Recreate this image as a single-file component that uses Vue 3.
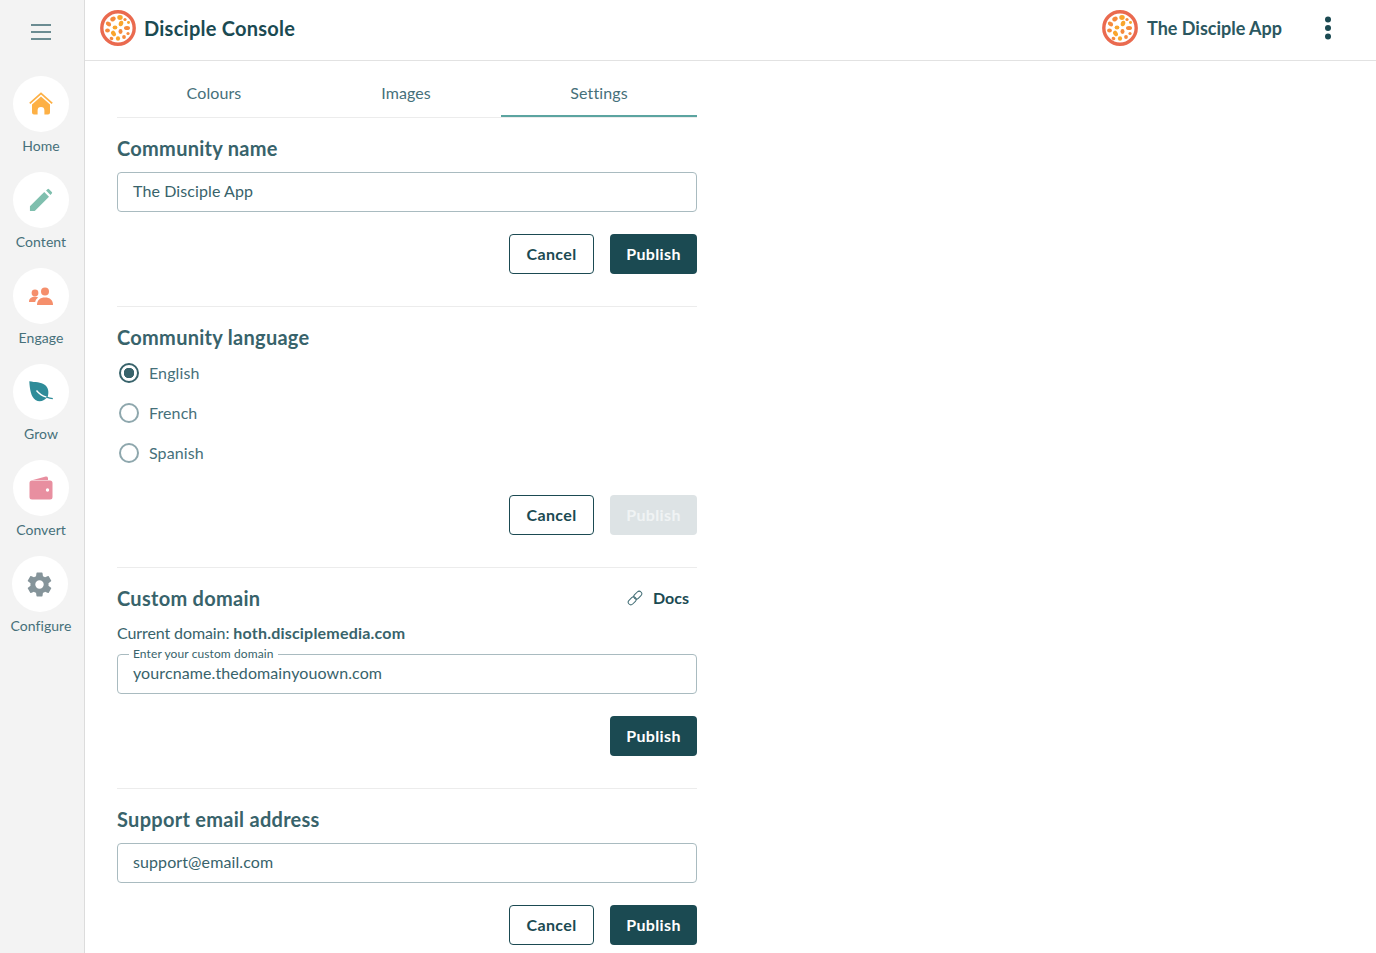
<script setup>
const nav = [
  { label: 'Home', key: 'home' },
  { label: 'Content', key: 'content' },
  { label: 'Engage', key: 'engage' },
  { label: 'Grow', key: 'grow' },
  { label: 'Convert', key: 'convert' },
  { label: 'Configure', key: 'configure' },
]
const tabs = ['Colours', 'Images', 'Settings']
const langs = ['English', 'French', 'Spanish']
const seeds = [
  [2,-10.5,2.7,2.4,'#f9a52c',0],[-5,-9,2.8,2.2,'#f58a3c',-30],[7,-8.5,1.6,1.5,'#f58a3c',0],[10.5,-5.5,1.5,1.4,'#f9a52c',0],
  [-9.5,-4,2.8,2.1,'#f58a3c',30],[3,-4.5,2.2,2.8,'#f9a52c',20],[9,0,3,2.1,'#f58a3c',0],[-3,-.5,2.4,1.9,'#f9a52c',0],
  [-10.5,2.5,2.4,1.9,'#f58a3c',0],[-4.5,5.5,2.2,3,'#f9a52c',-30],[2.5,3.5,2,2.4,'#f58a3c',0],[10,5.5,1.6,1.5,'#f58a3c',0],
  [0,10.5,2.1,2.3,'#f9a52c',0],[6,9,1.9,1.9,'#f58a3c',0],[-6.5,10.5,1.9,1.6,'#f58a3c',30],
]
</script>

<template>
  <div class="shell">
    <aside class="rail">
      <button class="burger" aria-label="Menu">
        <svg width="20" height="16" viewBox="0 0 20 16"><path d="M0 1h20M0 8h20M0 15h20" stroke="#3f6b73" stroke-width="1.6" fill="none"/></svg>
      </button>
      <nav class="rail-list">
        <a v-for="n in nav" :key="n.key" class="rail-item">
          <span class="disc" :class="{ shifted: n.key === 'configure' }">
            <svg v-if="n.key === 'home'" width="24" height="24" viewBox="0 0 24 24">
              <path d="M3 12.600 12 4.600l9 8v8a2 2 0 0 1-2 2h-3.600v-4.200a3.400 3.400 0 0 0-6.800 0v4.200H5a2 2 0 0 1-2-2z" fill="#fdb045"/>
              <path d="M.8 11.400 12 1.400l11.200 10" fill="none" stroke="#fdb045" stroke-width="1.800"/>
            </svg>
            <svg v-else-if="n.key === 'content'" width="24" height="24" viewBox="0 0 26 26">
              <path d="M1 25v-5.200L16.500 4.300l5.200 5.200L6.200 25z" fill="#7fbfae"/>
              <path d="M18.500 2.800 20 1.300a1.200 1.200 0 0 1 1.700 0l3 3a1.200 1.200 0 0 1 0 1.700l-1.500 1.500z" fill="#7fbfae"/>
            </svg>
            <svg v-else-if="n.key === 'engage'" width="24" height="18" viewBox="0 0 24 18">
              <circle cx="16" cy="4.500" r="4" fill="#f58f6c"/>
              <circle cx="6" cy="6" r="3.400" fill="#f58f6c"/>
              <path d="M8 18c0-5 3-7.500 8-7.500s8 2.500 8 7.500z" fill="#f58f6c"/>
              <path d="M0 15c0-3.600 2.500-5.200 6-5.200 1.300 0 2.300.2 3.200.6C7.400 11.600 6.500 13 6.200 15z" fill="#f58f6c"/>
            </svg>
            <svg v-else-if="n.key === 'grow'" width="24" height="22" viewBox="0 0 24 22">
              <path d="M.3.300C6 1.500 12 .8 16 4c3.200 2.600 4.200 7 2.800 11.500C15.500 20 10.500 21.500 6.500 19 1.800 16 .8 8 .3.300z" fill="#2e8c99"/>
              <path d="M7.500 9.500c2.500 3.200 6 5.500 10 6.700" fill="none" stroke="#fff" stroke-width="1.300"/>
              <path d="M17.500 16.200c2.200.7 4.200 1.200 6.300 1.500" fill="none" stroke="#2e8c99" stroke-width="1.300"/>
            </svg>
            <svg v-else-if="n.key === 'convert'" width="24" height="24" viewBox="0 0 24 24">
              <path d="M2 4.600 16.800.6a2 2 0 0 1 2.200 1.400V4H3.500z" fill="#e88fa0"/>
              <path d="M3 4.500h18a2.500 2.500 0 0 1 2.500 2.500v14a2.500 2.500 0 0 1-2.500 2.500H3A2.500 2.500 0 0 1 .5 21V7A2.500 2.500 0 0 1 3 4.500z" fill="#e88fa0"/>
              <circle cx="18.500" cy="14" r="1.700" fill="#fff"/>
            </svg>
            <svg v-else width="29" height="29" viewBox="0 0 24 24">
              <path d="M19.430 12.980c.04-.32.07-.64.07-.98s-.03-.66-.07-.98l2.110-1.650a.5.5 0 0 0 .12-.64l-2-3.460a.5.5 0 0 0-.61-.22l-2.490 1a7.300 7.300 0 0 0-1.690-.98l-.38-2.650A.49.49 0 0 0 14 2h-4a.49.49 0 0 0-.49.42l-.38 2.650c-.61.25-1.170.59-1.690.98l-2.490-1a.5.5 0 0 0-.61.22l-2 3.460a.49.49 0 0 0 .12.64l2.110 1.650c-.04.32-.07.65-.07.98s.03.66.07.98l-2.110 1.650a.5.5 0 0 0-.12.64l2 3.460c.12.22.39.3.61.22l2.490-1c.52.4 1.080.73 1.690.98l.38 2.650c.03.24.24.42.49.42h4c.25 0 .46-.18.49-.42l.38-2.650c.61-.25 1.170-.59 1.690-.98l2.490 1c.23.09.49 0 .61-.22l2-3.460a.5.5 0 0 0-.12-.64zM12 15.500a3.500 3.500 0 1 1 0-7 3.500 3.500 0 0 1 0 7z" fill="#85949a"/>
            </svg>
          </span>
          <span class="rail-label">{{ n.label }}</span>
        </a>
      </nav>
    </aside>

    <div class="main">
      <header class="topbar">
        <div class="brand">
          <svg class="logo" width="36" height="36" viewBox="-18 -18 36 36">
            <circle r="16.200" fill="#fff" stroke="#ea6a4f" stroke-width="3.400"/>
            <ellipse v-for="(s, i) in seeds" :key="i" :cx="s[0]" :cy="s[1]" :rx="s[2]" :ry="s[3]" :fill="s[4]" :transform="`rotate(${s[5]} ${s[0]} ${s[1]})`"/>
          </svg>
          <span class="brand-name">Disciple Console</span>
        </div>
        <div class="community">
          <svg class="logo" width="36" height="36" viewBox="-18 -18 36 36">
            <circle r="16.200" fill="#fff" stroke="#ea6a4f" stroke-width="3.400"/>
            <ellipse v-for="(s, i) in seeds" :key="i" :cx="s[0]" :cy="s[1]" :rx="s[2]" :ry="s[3]" :fill="s[4]" :transform="`rotate(${s[5]} ${s[0]} ${s[1]})`"/>
          </svg>
          <span class="community-name">The Disciple App</span>
          <svg class="kebab" width="6" height="24" viewBox="0 0 6 24">
            <circle cx="3" cy="3.500" r="3" fill="#1b4a52"/>
            <circle cx="3" cy="12" r="3" fill="#1b4a52"/>
            <circle cx="3" cy="20.500" r="3" fill="#1b4a52"/>
          </svg>
        </div>
      </header>

      <div class="page">
        <div class="tabs">
          <div v-for="t in tabs" :key="t" class="tab" :class="[t.toLowerCase(), { active: t === 'Settings' }]">{{ t }}</div>
        </div>

        <section class="sec">
          <h2>Community name</h2>
          <div class="field">The Disciple App</div>
          <div class="actions">
            <button class="btn ghost">Cancel</button>
            <button class="btn solid">Publish</button>
          </div>
        </section>

        <section class="sec">
          <h2>Community language</h2>
          <div class="radios">
            <label v-for="(l, i) in langs" :key="l" class="radio">
              <span class="dot" :class="{ on: i === 0 }"></span><span class="radio-text">{{ l }}</span>
            </label>
          </div>
          <div class="actions">
            <button class="btn ghost">Cancel</button>
            <button class="btn solid off">Publish</button>
          </div>
        </section>

        <section class="sec">
          <div class="head-row">
            <h2>Custom domain</h2>
            <a class="docs">
              <svg width="16" height="16" viewBox="0 0 16 16" fill="none" stroke="#3f6b73" stroke-width="1">
                <rect x="6.300" y="2.600" width="9" height="5.200" rx="2.600" transform="rotate(-45 10.800 5.200)"/>
                <rect x="0.700" y="8.200" width="9" height="5.200" rx="2.600" transform="rotate(-45 5.200 10.800)"/>
              </svg>
              <span class="docs-text">Docs</span>
            </a>
          </div>
          <p class="current">Current domain: <strong>hoth.disciplemedia.com</strong></p>
          <div class="field labelled">
            <span class="float-label">Enter your custom domain</span>
            yourcname.thedomainyouown.com
          </div>
          <div class="actions">
            <button class="btn solid">Publish</button>
          </div>
        </section>

        <section class="sec">
          <h2>Support email address</h2>
          <div class="field">support@email.com</div>
          <div class="actions">
            <button class="btn ghost">Cancel</button>
            <button class="btn solid">Publish</button>
          </div>
        </section>
      </div>
    </div>
  </div>
</template>

<style>
html, body { margin: 0; height: 100%; overflow: hidden; background: #fff; }
</style>

<style scoped>
.shell {
  display: flex;
  height: 953px;
  overflow: hidden;
  font-family: "Lato", "Open Sans", sans-serif;
  color: #38636b;
}
.rail {
  flex: 0 0 85px;
  box-sizing: border-box;
  padding-right: 2px;
  background: #f3f3f3;
  border-right: 1px solid #dcdcdc;
  display: flex;
  flex-direction: column;
  align-items: center;
}
.burger {
  border: 0;
  background: none;
  padding: 0;
  margin-top: 24px;
  height: 16px;
  display: block;
  line-height: 0;
}
.rail-list { display: flex; flex-direction: column; margin-top: 36px; }
.rail-item { height: 96px; display: flex; flex-direction: column; align-items: center; }
.disc {
  width: 56px;
  height: 56px;
  border-radius: 50%;
  background: #fff;
  display: flex;
  align-items: center;
  justify-content: center;
  flex: none;
}
.disc.shifted { margin-right: 2px; }
.rail-label { font-size: 14px; line-height: 17px; margin-top: 5px; letter-spacing: .05px; color: #46707a; }

.main { flex: 1; min-width: 0; display: flex; flex-direction: column; }
.topbar {
  height: 61px;
  box-sizing: border-box;
  border-bottom: 1px solid #e2e2e2;
  display: flex;
  justify-content: space-between;
  padding: 0 45px 0 15px;
  flex: none;
}
.brand, .community { display: flex; align-items: center; height: 56px; }
.brand-name { font-size: 20px; font-weight: 700; letter-spacing: .25px; color: #1b4a52; margin-left: 8px; }
.community-name { font-size: 18px; font-weight: 700; color: #2b5760; margin-left: 9px; width: 178px; }

.page { width: 580px; padding-left: 32px; }
.tabs { display: flex; height: 57px; box-sizing: border-box; border-bottom: 1px solid #ececec; }
.tab {
  text-align: center;
  font-size: 16px;
  line-height: 20px;
  letter-spacing: .1px;
  padding-top: 22px;
  box-sizing: border-box;
  height: 56px;
  color: #46707a;
}
.colours { flex: 0 0 194px; }
.images { flex: 0 0 190px; }
.settings { flex: 0 0 196px; }
.tab.active { border-bottom: 2px solid #5ba4a0; }

.sec { border-bottom: 1px solid #ececec; padding: 18px 0 32px; }
.sec:last-child { border-bottom: 0; }
h2 { margin: 0; font-size: 20px; line-height: 24px; font-weight: 700; letter-spacing: .28px; color: #38636b; }
.field {
  margin-top: 12px;
  height: 40px;
  box-sizing: border-box;
  border: 1px solid #a9bbc0;
  border-radius: 4px;
  padding: 0 15px;
  font-size: 16px;
  line-height: 36px;
  letter-spacing: .1px;
  color: #38636b;
}
.labelled { position: relative; margin-top: 11px; }
.float-label {
  position: absolute;
  left: 11px;
  top: -7px;
  padding: 0 4px;
  background: #fff;
  font-size: 12px;
  line-height: 12px;
  letter-spacing: .1px;
}
.actions { display: flex; justify-content: flex-end; gap: 16px; margin-top: 22px; }
.btn {
  height: 40px;
  border-radius: 4px;
  font-family: inherit;
  font-size: 16px;
  font-weight: 700;
  letter-spacing: .38px;
  padding: 0 0 2px;
  box-sizing: border-box;
}
.ghost { width: 85px; background: #fff; border: 1px solid #1b4a52; color: #1b4a52; }
.solid { width: 87px; background: #1b4a52; border: 0; color: #fff; }
.solid.off { background: #dde3e5; color: #f0f3f4; }

.radios { display: flex; flex-direction: column; margin-top: 4px; }
.radio { display: flex; align-items: center; height: 40px; font-size: 16px; letter-spacing: .1px; color: #46707a; }
.radio-text { padding-bottom: 2px; }
.dot {
  width: 20px;
  height: 20px;
  box-sizing: border-box;
  border: 2px solid #8ea7ad;
  border-radius: 50%;
  margin: 0 10px 0 2px;
  flex: none;
}
.dot.on {
  border-color: #38636b;
  background: radial-gradient(circle, #38636b 0 5px, #fff 5.500px);
}

.head-row { display: flex; justify-content: space-between; align-items: center; height: 24px; padding-right: 8px; }
.docs { display: flex; align-items: center; gap: 10px; font-size: 16px; font-weight: 700; color: #1b4a52; }
.docs-text { padding-bottom: 2px; }
.current { margin: 13px 0 0; font-size: 16px; line-height: 20px; height: 20px; letter-spacing: -.1px; }
.current strong { font-weight: 700; letter-spacing: .2px; }
</style>
